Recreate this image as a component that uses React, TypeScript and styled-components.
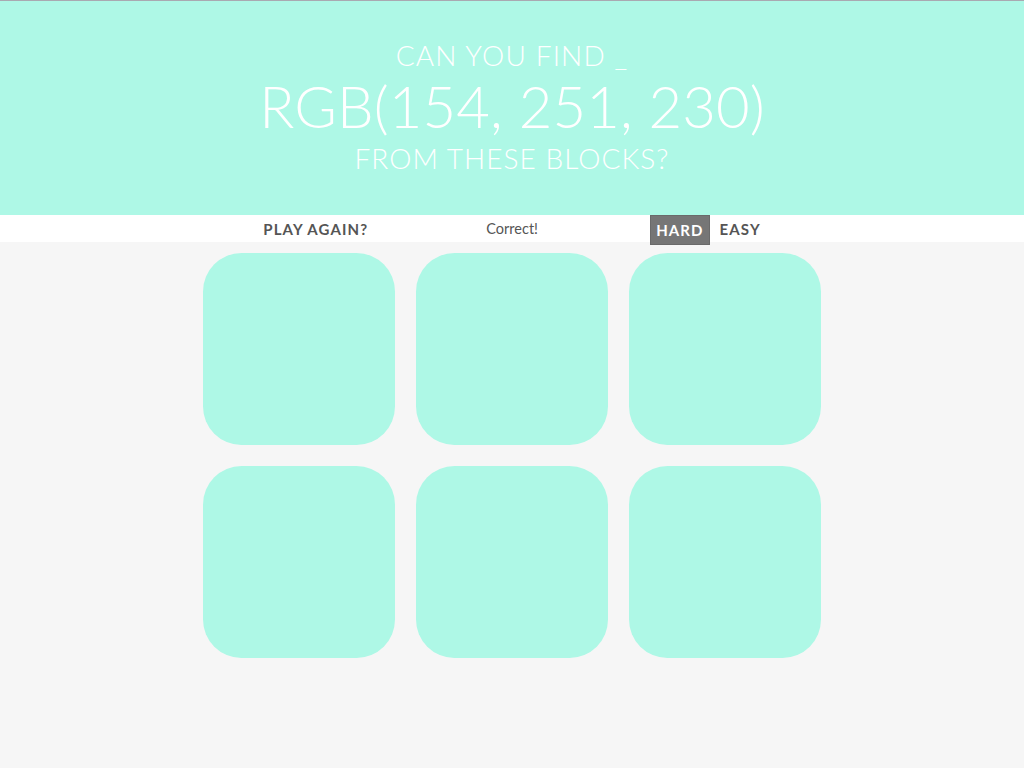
import React from "react";
import styled, { createGlobalStyle } from "styled-components";

const GlobalStyle = createGlobalStyle`
  html, body {
    margin: 0;
    padding: 0;
    background: #f6f6f6;
    font-family: Lato, "Open Sans", sans-serif;
  }
  * { box-sizing: border-box; }
`;

const TEAL = "#aef8e6";

const Header = styled.header`
  background: ${TEAL};
  border-top: 1px solid #a9a9b1;
  height: 215px;
  display: flex;
  flex-direction: column;
  align-items: center;
  padding-top: 35px;
  color: #ffffff;
  text-align: center;
  font-weight: 300;
`;

const Line = styled.div<{ $size: number; $lh: number; $ls: number }>`
  font-size: ${(p) => p.$size}px;
  line-height: ${(p) => p.$lh}px;
  letter-spacing: ${(p) => p.$ls}px;
  text-transform: uppercase;
`;

const Stripe = styled.nav`
  background: #ffffff;
  height: 27px;
  display: flex;
  justify-content: center;
  align-items: stretch;
`;

const NavButton = styled.button<{ $selected?: boolean }>`
  border: none;
  margin: 0;
  padding: 0 5px;
  font-family: Lato, "Open Sans", sans-serif;
  font-weight: 700;
  font-size: 15px;
  letter-spacing: 1.1px;
  text-transform: uppercase;
  color: ${(p) => (p.$selected ? "#ffffff" : "#555555")};
  background: ${(p) => (p.$selected ? "#767676" : "transparent")};
  outline: ${(p) => (p.$selected ? "1px solid #6a6a6a" : "none")};
  height: ${(p) => (p.$selected ? "28px" : "27px")};
  margin-top: ${(p) => (p.$selected ? "1px" : "0")};
  cursor: pointer;
`;

const Message = styled.span`
  width: 278px;
  display: flex;
  align-items: center;
  justify-content: center;
  font-size: 14.5px;
  font-weight: 400;
  color: #555555;
`;

const Modes = styled.div`
  display: flex;
  gap: 6px;
`;

const Board = styled.main`
  width: 640px;
  margin: 0 auto;
  display: grid;
  grid-template-columns: repeat(3, 192px);
  gap: 21.3px;
  padding: 11px 10.5px;
`;

const Square = styled.div<{ $color: string }>`
  width: 192px;
  height: 192px;
  border-radius: 20%;
  background: ${(p) => p.$color};
`;

const colors = Array(6).fill(TEAL);

export default function App() {
  return (
    <>
      <GlobalStyle />
      <Header>
        <Line $size={28} $lh={38} $ls={1.15}>Can you find _</Line>
        <Line $size={58} $lh={64} $ls={0.1}>RGB(154, 251, 230)</Line>
        <Line $size={28} $lh={40} $ls={1.05}>from these blocks?</Line>
      </Header>
      <Stripe>
        <NavButton>Play Again?</NavButton>
        <Message>Correct!</Message>
        <Modes>
          <NavButton $selected>Hard</NavButton>
          <NavButton>Easy</NavButton>
        </Modes>
      </Stripe>
      <Board>
        {colors.map((c, i) => (
          <Square key={i} $color={c} />
        ))}
      </Board>
    </>
  );
}
